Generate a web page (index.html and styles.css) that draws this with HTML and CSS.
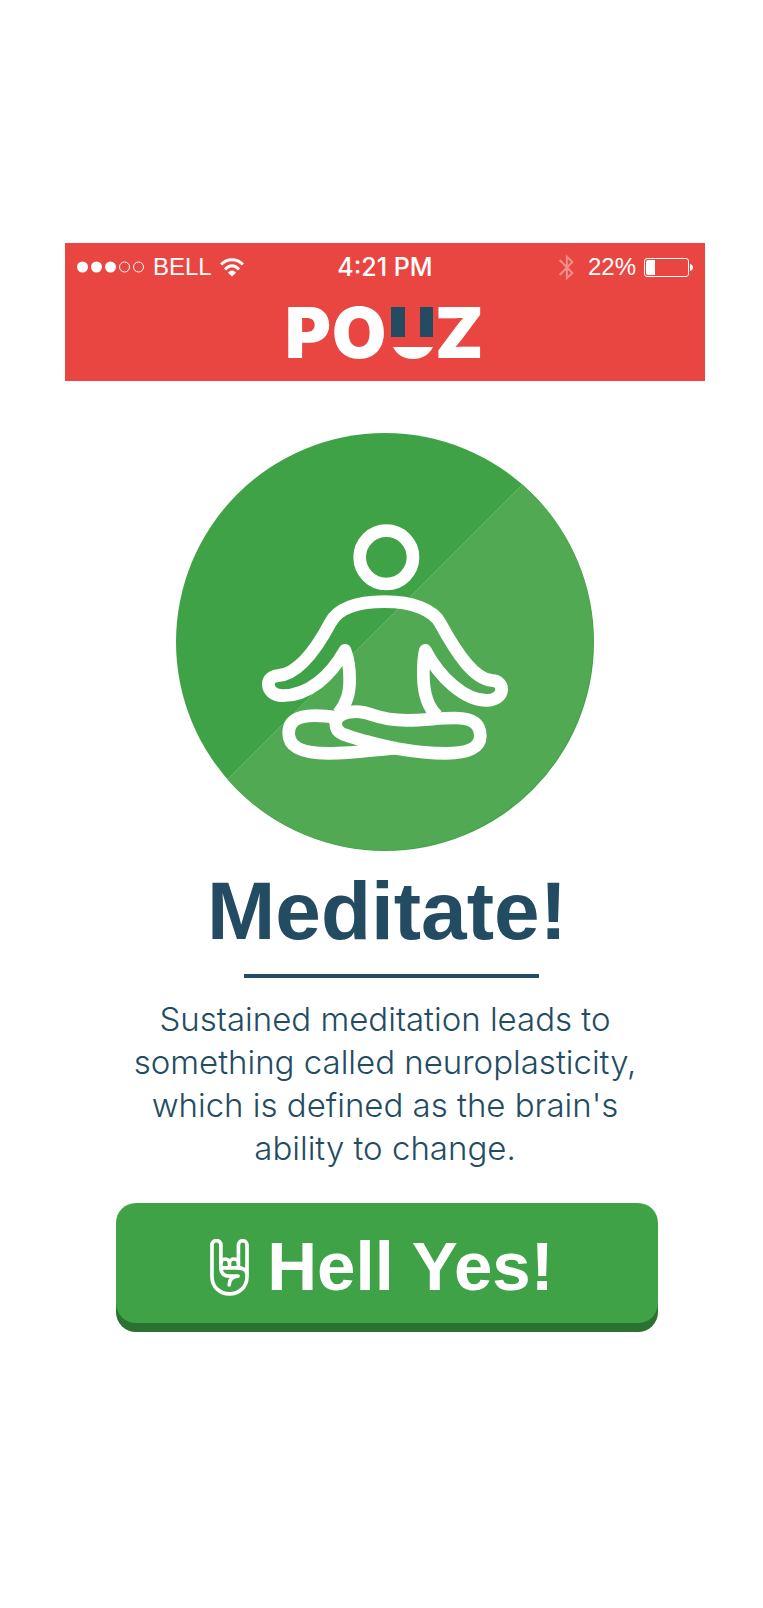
FILE: index.html
```html
<!DOCTYPE html>
<html lang="en">
<head>
<meta charset="utf-8">
<meta name="viewport" content="width=device-width, initial-scale=1">
<title>Pouz – Meditate</title>
<link rel="stylesheet" href="styles.css">
</head>
<body>
<div class="screen">
  <header class="header">
    <div class="status">
      <div class="status-left">
        <svg class="signal" viewBox="0 0 68 12" width="68" height="12" aria-hidden="true">
          <g fill="#fff"><circle cx="5.5" cy="6" r="5.5"/><circle cx="19.5" cy="6" r="5.5"/><circle cx="33.5" cy="6" r="5.5"/></g>
          <g fill="none" stroke="#fff"><circle cx="47.5" cy="6" r="5"/><circle cx="61.5" cy="6" r="5"/></g>
        </svg>
        <span>BELL</span>
        <svg class="wifi" viewBox="0 0 72 56" width="24" height="19" aria-hidden="true">
          <g fill="none" stroke="#fff" stroke-width="9"><path d="M3 19C22 0 50 0 69 19"/><path d="M15 34C28 19 44 19 57 34"/></g>
          <path fill="#fff" d="M24 44C31 35 41 35 48 44L36 55Z"/>
        </svg>
      </div>
      <time class="clock">4:21 PM</time>
      <div class="status-right">
        <svg class="bluetooth" viewBox="0 0 46 82" width="15" height="27" aria-hidden="true">
          <path fill="none" stroke="#fff" stroke-width="6" d="M2 18L41 58L24 74V8L41 24L2 64"/>
        </svg>
        <span>22%</span>
        <svg class="battery" viewBox="0 0 49 19" width="49" height="19" aria-hidden="true">
          <rect x=".5" y=".5" width="44" height="18" rx="2.5" fill="none" stroke="#fff"/>
          <path fill="#fff" d="M4 2H11V17H4A2 2 0 0 1 2 15V4A2 2 0 0 1 4 2ZM46 6Q49 7 49 9.500T46 13Z"/>
        </svg>
      </div>
    </div>
    <svg class="logo" viewBox="0 0 192 56" width="192" height="56" role="img" aria-label="Pouz">
      <g class="logo-text"><text x="-4" y="53">P</text><text x="43" y="53">O</text><text x="146" y="53">Z</text></g>
      <path fill="#234c63" d="M102 2H116V32H102ZM131 2H144V32H131Z"/>
      <path fill="#fff" d="M104 42H144C140 50 133 54 124 54S108 50 104 42Z"/>
    </svg>
  </header>

  <main class="main">
    <svg class="badge" viewBox="176 433 418 418" role="img" aria-label="Person meditating">
      <circle cx="385" cy="642" r="209" fill="#40a247"/>
      <path fill="#52a953" d="M522.500 484.500A209 209 0 1 1 227.500 779.500Z"/>
      <path stroke="#79bd7b" stroke-width=".6" d="M522.500 484.500L227.500 779.500"/>
      <g transform="translate(250 510) scale(.33333)" fill="none" stroke="#fff" stroke-width="38" stroke-linejoin="round">
        <circle cx="409" cy="142" r="80"/>
        <path d="M265 611C292 577 299 548 299 510C299 475 295 445 285 421C240 500 175 557 98 557C70 557 55 540 55 523C55 508 66 499 84 497C140 492 195 425 241 338C263 297 320 275 404 275C488 275 550 300 571 340C620 430 672 507 725 511C745 512 755 524 755 538C755 558 735 571 710 571C645 571 570 505 526 421C519 450 520 470 520 500C521 545 533 592 562 618"/>
        <path d="M257 622C235 618 215 617 195 617C150 617 116 628 116 670C116 712 155 730 235 730C300 730 360 722 443 714"/>
        <path d="M257 640C257 618 285 605 320 605C365 605 375 631 470 631C530 631 560 624 615 624C665 624 691 640 691 678C691 712 655 730 588 730C530 730 490 724 443 716C405 709 380 702 350 694C320 687 300 679 280 673C265 667 257 655 257 640Z"/>
      </g>
    </svg>

    <section class="activity">
      <h1 class="title">Meditate!</h1>
      <hr class="rule">
      <p class="copy">Sustained meditation leads to something called neuroplasticity, which is defined as the brain's ability to change.</p>

      <button class="cta" type="button">
        <svg class="rock" viewBox="303 142 118 172" width="39" height="57" aria-hidden="true">
          <g fill="none" stroke="#fff" stroke-width="11" stroke-linecap="round" stroke-linejoin="round">
            <path d="M336 230V160A13.500 13.500 0 0 0 309 160V255C309 287 333 308 362 308C391 308 415 287 415 255V160A13 13 0 0 0 389 160V225"/>
            <path d="M336 215C336 198 362 198 362 215V228M362 215C362 198 389 198 389 215"/>
            <path d="M336 229H385C400 229 412 235 414 245M336 229C336 245 345 254 362 254H388C367 255 361 266 361 281"/>
          </g>
        </svg>
        <span>Hell Yes!</span>
      </button>
    </section>
  </main>
</div>
</body>
</html>
```
FILE: styles.css
```css
* {
  box-sizing: border-box;
}

body {
  margin: 0;
  background: #fff;
  color: #234c63;
  font-family: "Liberation Sans", Arial, sans-serif;
}

.screen {
  padding: 243px 58px 64px 65px;
}

.header {
  display: flex;
  flex-direction: column;
  gap: 24px;
  padding: 10px 12px 20px;
  background: #ea4641;
  color: #fff;
}

.status {
  display: grid;
  grid-template-columns: 1fr auto 1fr;
  align-items: center;
  font-size: 24px;
  line-height: 28px;
}

.status-left,
.status-right {
  display: flex;
  align-items: center;
  gap: 8px;
}

.status-right {
  justify-content: flex-end;
}

.clock {
  font-family: Inter, "Liberation Sans", sans-serif;
  font-size: 25px;
  font-weight: 500;
}

.bluetooth {
  margin-right: 6px;
  opacity: .4;
}

.logo {
  align-self: center;
  overflow: visible;
}

.logo-text {
  fill: #fff;
  font-family: Inter, "Liberation Sans", sans-serif;
  font-size: 70px;
  font-weight: 900;
}

.main,
.activity {
  display: flex;
  flex-direction: column;
  align-items: center;
}

.main {
  padding-top: 52px;
}

.badge {
  width: 100%;
  max-width: 418px;
}

.activity {
  width: 100%;
  padding-left: 4px;
}

.title {
  margin: 20px 0 0;
  font-size: 82px;
  line-height: 80px;
}

.rule {
  width: 100%;
  max-width: 295px;
  height: 4px;
  margin: 23px 0 20px 8px;
  border: 0;
  background: #234c63;
}

.copy {
  max-width: 520px;
  margin: 0;
  padding-right: 4px;
  font-family: Inter, "Liberation Sans", sans-serif;
  font-size: 33px;
  font-weight: 300;
  line-height: 43px;
  text-align: center;
}

.cta {
  display: flex;
  align-items: center;
  justify-content: center;
  gap: 18px;
  width: 100%;
  max-width: 542px;
  margin: 33px 0 9px;
  padding: 24px 10px 16px 0;
  border: 0;
  border-radius: 20px;
  background: #40a247;
  box-shadow: 0 9px #2b7230;
  color: #fff;
  font: bold 69px/80px "Liberation Sans", Arial, sans-serif;
  cursor: pointer;
}
```
